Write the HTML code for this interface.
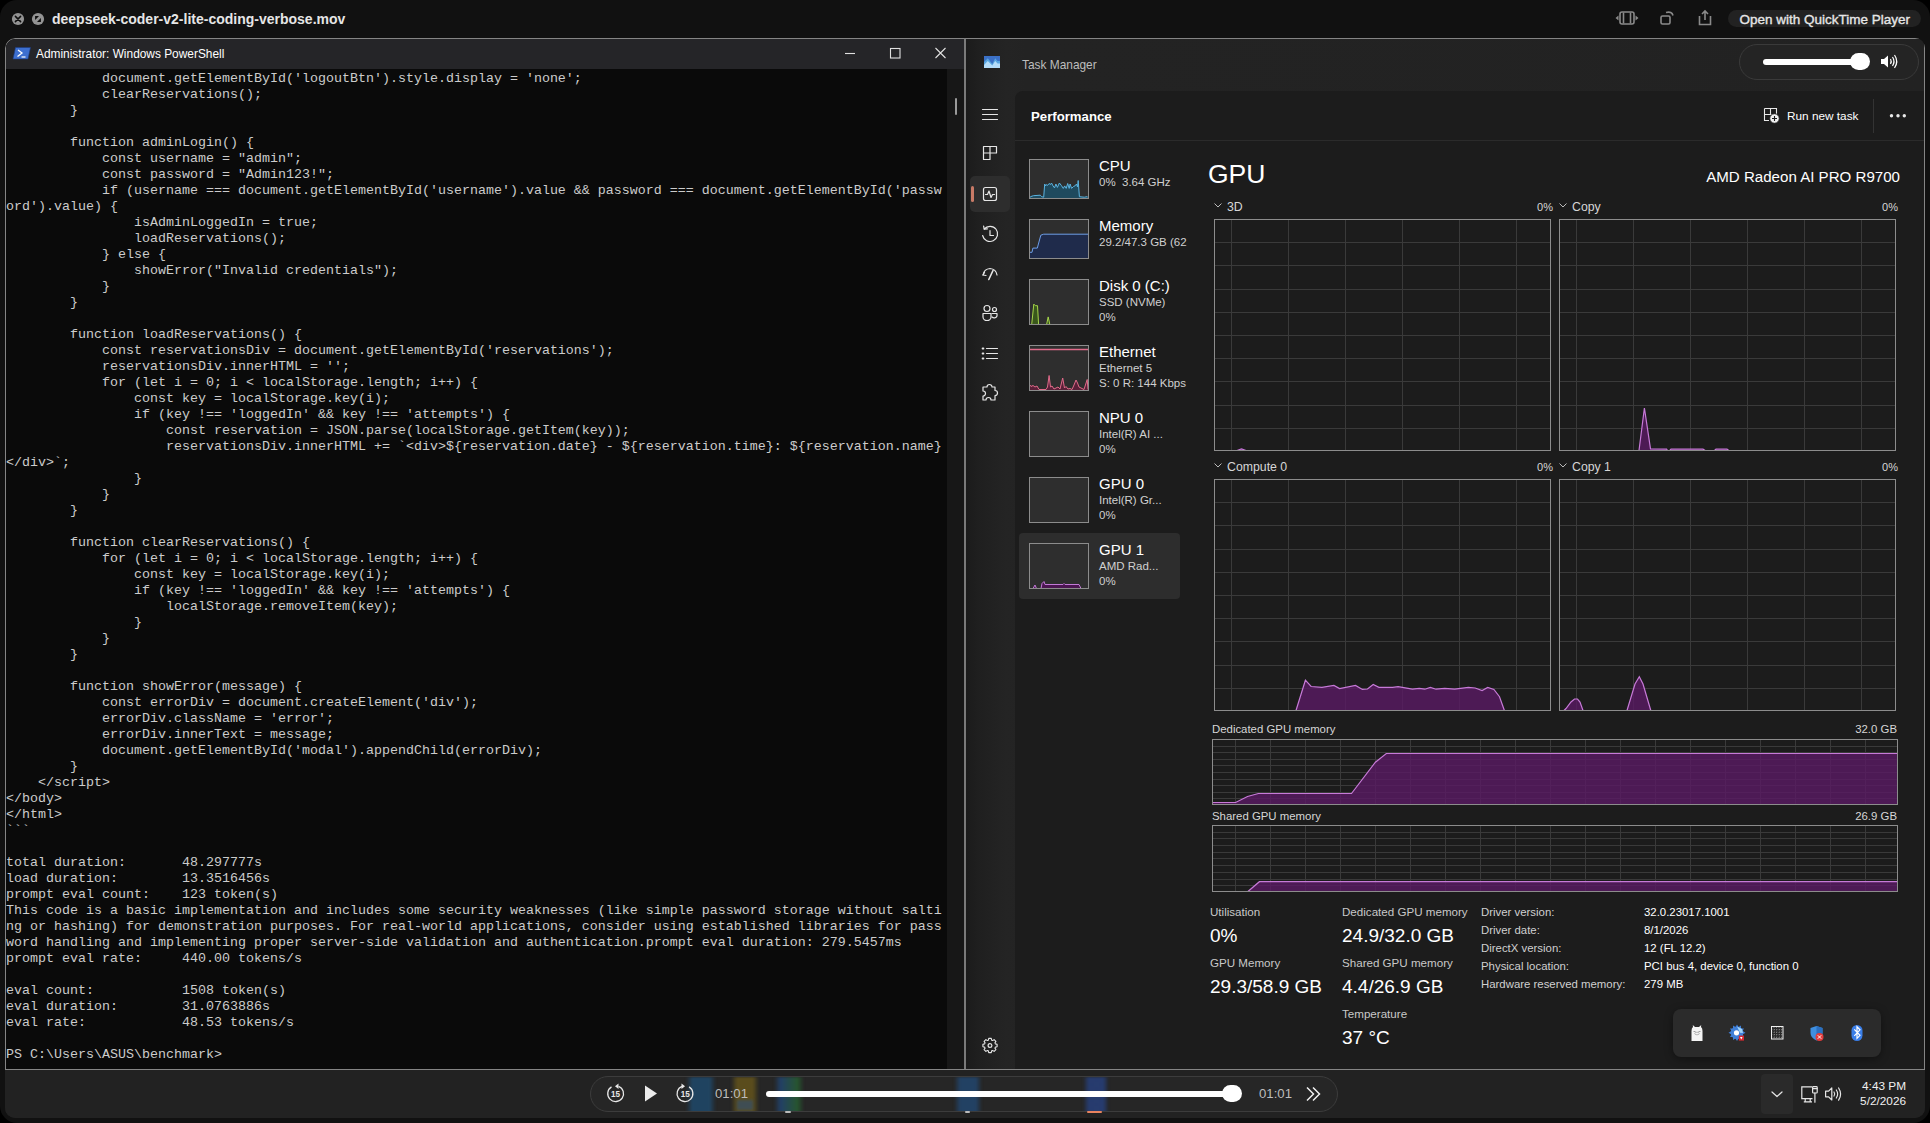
<!DOCTYPE html><html><head><meta charset="utf-8"><style>
*{box-sizing:border-box;margin:0;padding:0}
html,body{width:1930px;height:1123px;overflow:hidden;background:#000}
body{position:relative;font-family:"Liberation Sans",sans-serif;color:#fff}
.a{position:absolute}
svg.s{position:absolute;left:0;top:0;overflow:visible}
#win{position:absolute;left:0;top:0;width:1930px;height:1123px;border-radius:17px;background:#111;overflow:hidden}
#frame{position:absolute;left:5px;top:38px;width:1920px;height:1080px;border-radius:10px;overflow:hidden;background:#1f1f1f}
#ps{position:absolute;left:0;top:0;width:960px;height:1032px;background:#0a0a0a;border:1px solid #858585;border-right:none;border-bottom:none;border-top-left-radius:10px;overflow:hidden}
#pstitle{position:absolute;left:0;top:0;width:959px;height:30px;background:#252528}
#term{position:absolute;left:0px;top:32px;width:941px;font-family:"Liberation Mono",monospace;font-size:13.333px;line-height:16px;color:#cccccc;white-space:pre}
#sb{position:absolute;left:941px;top:30px;width:18px;height:1002px;background:#171717}
#tm{position:absolute;left:959px;top:0;width:961px;height:1032px;background:linear-gradient(90deg,#1b1b1b 0px,#1f1f1f 12px,#242424 40px,#232323 60px,#222222 100%);border-top:1px solid #858585;border-left:2px solid #7a7a7a;border-right:1px solid #858585;border-bottom:1px solid #858585}
#tb{position:absolute;left:0;top:1032px;width:1920px;height:48px;background:#222222}
.t{position:absolute;white-space:pre;line-height:1}
</style></head><body>
<div id="win">
<div id="frame">
<div id="ps"><div id="pstitle"></div>
<div id="term">            document.getElementById(&#x27;logoutBtn&#x27;).style.display = &#x27;none&#x27;;
            clearReservations();
        }

        function adminLogin() {
            const username = &quot;admin&quot;;
            const password = &quot;Admin123!&quot;;
            if (username === document.getElementById(&#x27;username&#x27;).value &amp;&amp; password === document.getElementById(&#x27;passw
ord&#x27;).value) {
                isAdminLoggedIn = true;
                loadReservations();
            } else {
                showError(&quot;Invalid credentials&quot;);
            }
        }

        function loadReservations() {
            const reservationsDiv = document.getElementById(&#x27;reservations&#x27;);
            reservationsDiv.innerHTML = &#x27;&#x27;;
            for (let i = 0; i &lt; localStorage.length; i++) {
                const key = localStorage.key(i);
                if (key !== &#x27;loggedIn&#x27; &amp;&amp; key !== &#x27;attempts&#x27;) {
                    const reservation = JSON.parse(localStorage.getItem(key));
                    reservationsDiv.innerHTML += `&lt;div&gt;${reservation.date} - ${reservation.time}: ${reservation.name}
&lt;/div&gt;`;
                }
            }
        }

        function clearReservations() {
            for (let i = 0; i &lt; localStorage.length; i++) {
                const key = localStorage.key(i);
                if (key !== &#x27;loggedIn&#x27; &amp;&amp; key !== &#x27;attempts&#x27;) {
                    localStorage.removeItem(key);
                }
            }
        }

        function showError(message) {
            const errorDiv = document.createElement(&#x27;div&#x27;);
            errorDiv.className = &#x27;error&#x27;;
            errorDiv.innerText = message;
            document.getElementById(&#x27;modal&#x27;).appendChild(errorDiv);
        }
    &lt;/script&gt;
&lt;/body&gt;
&lt;/html&gt;
```

total duration:       48.297777s
load duration:        13.3516456s
prompt eval count:    123 token(s)
This code is a basic implementation and includes some security weaknesses (like simple password storage without salti
ng or hashing) for demonstration purposes. For real-world applications, consider using established libraries for pass
word handling and implementing proper server-side validation and authentication.prompt eval duration: 279.5457ms
prompt eval rate:     440.00 tokens/s

eval count:           1508 token(s)
eval duration:        31.0763886s
eval rate:            48.53 tokens/s

PS C:\Users\ASUS\benchmark&gt;</div>
<div id="sb"><div class="a" style="left:8px;top:29px;width:2px;height:17px;background:#9a9a9a;border-radius:1px"></div></div>
</div>
<div id="tm"></div>
<div id="tb"></div>
</div>
</div>
<svg class="s" width="1930" height="1123" viewBox="0 0 1930 1123" >
<circle cx="18" cy="19" r="6.1" fill="#939393"/>
<path d="M15.4 16.4 L20.6 21.6 M20.6 16.4 L15.4 21.6" stroke="#0e0e0e" stroke-width="1.5" stroke-linecap="round"/>
<circle cx="38" cy="19" r="6.1" fill="#939393"/>
<path d="M35.1 16 L39 16 L35.1 19.9 Z M40.9 22 L37 22 L40.9 18.1 Z" fill="#0e0e0e"/>
</svg>
<div class="t" style="left:52.00px;top:11.95px;font-size:14px;color:#e6e6e6;font-weight:bold;">deepseek-coder-v2-lite-coding-verbose.mov</div>
<svg class="s" width="1930" height="1123" viewBox="0 0 1930 1123" >
<g stroke="#8a8a8a" fill="none" stroke-width="1.6">
<rect x="1620" y="12" width="14" height="12" rx="2"/>
<line x1="1623.5" y1="12.5" x2="1623.5" y2="23.5"/>
<line x1="1630.5" y1="12.5" x2="1630.5" y2="23.5"/>
<rect x="1661" y="16" width="9" height="8" rx="1.5"/>
<path d="M1666 12.5 Q1672 11 1673 15.5"/>
<path d="M1699.5 16 L1699.5 24.5 L1710.5 24.5 L1710.5 16"/>
<path d="M1705 20 L1705 11 M1702 14 L1705 11 L1708 14"/>
</g>
<path d="M1615.5 18 L1618.5 15.5 L1618.5 20.5 Z M1638.5 18 L1635.5 15.5 L1635.5 20.5 Z" fill="#8a8a8a"/>
</svg>
<div class="a" style="left:1728px;top:10px;width:193px;height:17px;background:#222;border-radius:9px"></div>
<div class="t" style="left:1739.50px;top:12.57px;font-size:13.5px;color:#e6e6e6;-webkit-text-stroke:0.35px #e6e6e6;">Open with QuickTime Player</div>
<svg class="s" width="1930" height="1123" viewBox="0 0 1930 1123" >
<path d="M15.5 47.5 L30.5 47.5 L28 59 L13 59 Z" fill="#3d6fd0" stroke="#1b3a80" stroke-width="0.6"/>
<path d="M18 50 L22 53 L17.5 56.5" fill="none" stroke="#fff" stroke-width="1.3"/>
<path d="M21.5 57 L25.5 57" stroke="#fff" stroke-width="1.2"/>
<g stroke="#e0e0e0" stroke-width="1.1" fill="none">
<line x1="845" y1="53.5" x2="855" y2="53.5"/>
<rect x="890.5" y="48.5" width="9.5" height="9.5"/>
<path d="M935.5 48 L945.5 58 M945.5 48 L935.5 58"/>
</g>
</svg>
<div class="t" style="left:36.00px;top:48.93px;font-size:11.9px;color:#ffffff;">Administrator: Windows PowerShell</div>
<svg class="s" width="1930" height="1123" viewBox="0 0 1930 1123" >
<rect x="984" y="56" width="16" height="12" fill="#3b70c6"/>
<path d="M984 62 L987.8 58.2 L992.3 64 L995.2 58.2 L997.5 61 L1000 61 L1000 68 L984 68 Z" fill="#58a6e0"/>
<path d="M984 65 L987.8 61 L992.3 65.5 L995.2 61 L997.5 63.5 L1000 63.5 L1000 68 L984 68 Z" fill="#b4ddfa"/>
</svg>
<div class="t" style="left:1022.00px;top:59.93px;font-size:11.9px;color:#bdbdbd;">Task Manager</div>
<div class="a" style="left:1739px;top:44px;width:180px;height:36px;background:#242424;border:1px solid #3a3a3a;border-radius:18px"></div>
<div class="a" style="left:1763px;top:59px;width:100px;height:6px;background:#fff;border-radius:3px"></div>
<div class="a" style="left:1850px;top:53px;width:20px;height:17px;background:#fff;border-radius:9px"></div>
<svg class="s" width="1930" height="1123" viewBox="0 0 1930 1123" >
<path d="M1881 59 L1884 59 L1888 55.5 L1888 67.5 L1884 64 L1881 64 Z" fill="#fff"/>
<g fill="none" stroke="#fff" stroke-width="1.2">
<path d="M1890.5 59 Q1892 61.5 1890.5 64"/>
<path d="M1892.5 57 Q1895.5 61.5 1892.5 66"/>
<path d="M1894.5 55 Q1899 61.5 1894.5 68"/>
</g>
</svg>
<div class="a" style="left:1015px;top:91px;width:909px;height:978px;background:#1c1c1c;border-top-left-radius:8px"></div>
<div class="a" style="left:1015px;top:140px;width:909px;height:1px;background:#2b2b2b"></div>
<div class="t" style="left:1031.00px;top:109.53px;font-size:13.2px;color:#ffffff;font-weight:bold;">Performance</div>
<svg class="s" width="1930" height="1123" viewBox="0 0 1930 1123" >
<g stroke="#e8e8e8" stroke-width="1.1" fill="none">
<path d="M1764.5 108.5 L1776.5 108.5 L1776.5 114 M1764.5 108.5 L1764.5 120.5 L1769 120.5 M1770.5 108.5 L1770.5 114.5 M1764.5 114.5 L1776.5 114.5"/>
</g>
<circle cx="1774.5" cy="118.5" r="4.8" fill="#f0f0f0" stroke="#1c1c1c" stroke-width="1"/>
<path d="M1774.5 116 L1774.5 121 M1772 118.5 L1777 118.5" stroke="#1c1c1c" stroke-width="1.1"/>
<line x1="1873.5" y1="99" x2="1873.5" y2="133" stroke="#333" stroke-width="1"/>
<circle cx="1891.5" cy="115.8" r="1.7" fill="#e8e8e8"/>
<circle cx="1898" cy="115.8" r="1.7" fill="#e8e8e8"/>
<circle cx="1904.3" cy="115.8" r="1.7" fill="#e8e8e8"/>
</svg>
<div class="t" style="left:1787.00px;top:111.01px;font-size:11.8px;color:#ffffff;">Run new task</div>
<div class="a" style="left:970px;top:176px;width:40px;height:36px;background:#2d2d2d;border-radius:5px"></div>
<div class="a" style="left:971px;top:186px;width:3px;height:16px;background:#c97b67;border-radius:2px"></div>
<svg class="s" width="1930" height="1123" viewBox="0 0 1930 1123" >
<g stroke="#e6e6e6" stroke-width="1.2" fill="none" stroke-linecap="round" stroke-linejoin="round">
<path d="M982.5 109.5 L997.5 109.5 M982.5 114.5 L997.5 114.5 M982.5 119.5 L997.5 119.5"/>
<path d="M983.5 146.5 L990 146.5 L990 153 L983.5 153 Z M990 146.5 L996.5 146.5 L996.5 153 L990 153 M983.5 153 L983.5 159.5 L990 159.5 L990 153"/>
<rect x="983.5" y="187.5" width="13" height="13" rx="2"/>
<path d="M985.5 194.5 L987.5 194.5 L989 191 L991 197.5 L992.5 194.5 L994.5 194.5"/>
<path d="M984.2 229 A7.6 7.6 0 1 1 982.6 235.5"/>
<path d="M983.6 226 L984.2 229.2 L987.4 228.8"/>
<path d="M990 230.5 L990 235.5 L993.5 235.5"/>
<path d="M983 275 Q984 269 990 268.5 Q996 269 997 275"/>
<path d="M984.5 272.5 L983 275 L986 275.5"/>
<path d="M993 270.5 L988.8 279.5" stroke-width="1.6"/>
<circle cx="987" cy="308.5" r="3"/>
<circle cx="994.5" cy="309.5" r="2"/>
<path d="M983 313.5 L991 313.5 L991 317 A4 3.5 0 0 1 983 317 Z"/>
<path d="M992 313.5 L997 313.5 L997 316 A3 3 0 0 1 992 317"/>
<path d="M986.5 348.5 L997.5 348.5 M986.5 353.5 L997.5 353.5 M986.5 358.5 L997.5 358.5"/>
<path d="M982.6 348.5 L983.4 348.5 M982.6 353.5 L983.4 353.5 M982.6 358.5 L983.4 358.5" stroke-width="1.9"/>
<path d="M987 387 A2.5 2.5 0 0 1 992 387 L995 387 L995 390.5 A2.5 2.5 0 0 1 995 395.5 L995 400 L991 400 A2.5 2.5 0 0 0 986 400 L983 400 L983 396 A2.5 2.5 0 0 0 983 391 L983 387 Z"/>
<path d="M988.35 1040.15 L988.74 1038.41 L991.26 1038.41 L991.65 1040.15 L992.61 1040.55 L994.12 1039.60 L995.90 1041.38 L994.95 1042.89 L995.35 1043.85 L997.09 1044.24 L997.09 1046.76 L995.35 1047.15 L994.95 1048.11 L995.90 1049.62 L994.12 1051.40 L992.61 1050.45 L991.65 1050.85 L991.26 1052.59 L988.74 1052.59 L988.35 1050.85 L987.39 1050.45 L985.88 1051.40 L984.10 1049.62 L985.05 1048.11 L984.65 1047.15 L982.91 1046.76 L982.91 1044.24 L984.65 1043.85 L985.05 1042.89 L984.10 1041.38 L985.88 1039.60 L987.39 1040.55 Z" stroke-width="1.1"/>
<circle cx="990" cy="1045.5" r="1.9"/>
</g>
</svg>
<div class="a" style="left:1019px;top:533px;width:161px;height:66px;background:#2d2d2d;border-radius:4px"></div>
<div class="a" style="left:1029px;top:159px;width:60px;height:40px;background:#2e2e2e"></div>
<svg class="s" width="1930" height="1123" viewBox="0 0 1930 1123" ><polygon points="1030,198.5 1029.5,197.7 1031.0,196.5 1033.4,195.7 1040.3,195.2 1041.7,196.7 1043.7,197.2 1044.7,184.0 1045.7,185.9 1046.6,184.5 1047.6,185.4 1049.1,183.5 1050.5,184.5 1051.5,183.0 1053.0,185.9 1054.5,187.9 1055.9,184.0 1057.4,187.4 1059.4,183.0 1061.3,185.4 1063.3,188.4 1064.7,185.9 1066.2,188.4 1067.7,183.5 1069.2,188.4 1070.1,184.0 1071.6,188.4 1073.6,186.4 1075.0,185.9 1076.5,184.0 1077.5,186.9 1078.2,180.5 1079.4,196.7 1084.3,197.2 1087.3,196.7 1088.3,197.7 1088,198.5" fill="#1f4a5e" stroke="none"/><polyline points="1029.5,197.7 1031.0,196.5 1033.4,195.7 1040.3,195.2 1041.7,196.7 1043.7,197.2 1044.7,184.0 1045.7,185.9 1046.6,184.5 1047.6,185.4 1049.1,183.5 1050.5,184.5 1051.5,183.0 1053.0,185.9 1054.5,187.9 1055.9,184.0 1057.4,187.4 1059.4,183.0 1061.3,185.4 1063.3,188.4 1064.7,185.9 1066.2,188.4 1067.7,183.5 1069.2,188.4 1070.1,184.0 1071.6,188.4 1073.6,186.4 1075.0,185.9 1076.5,184.0 1077.5,186.9 1078.2,180.5 1079.4,196.7 1084.3,197.2 1087.3,196.7 1088.3,197.7" fill="none" stroke="#5ab4e2" stroke-width="1"/></svg>
<div class="a" style="left:1029px;top:159px;width:60px;height:40px;border:1px solid #8c8c8c"></div>
<div class="a" style="left:1029px;top:219px;width:60px;height:40px;background:#2e2e2e"></div>
<svg class="s" width="1930" height="1123" viewBox="0 0 1930 1123" ><polygon points="1030,258.5 1030.0,252.3 1032.0,252.3 1032.9,248.1 1037.3,248.1 1040.8,235.2 1043.7,234.2 1088.0,234.2 1088,258.5" fill="#1f2b4b" stroke="none"/><polyline points="1030.0,252.3 1032.0,252.3 1032.9,248.1 1037.3,248.1 1040.8,235.2 1043.7,234.2 1088.0,234.2" fill="none" stroke="#6d9ee8" stroke-width="1"/></svg>
<div class="a" style="left:1029px;top:219px;width:60px;height:40px;border:1px solid #8c8c8c"></div>
<div class="a" style="left:1029px;top:279px;width:60px;height:46px;background:#2e2e2e"></div>
<svg class="s" width="1930" height="1123" viewBox="0 0 1930 1123" ><polygon points="1030,324.5 1030.0,324.5 1031.7,324.5 1033.8,304.1 1035.4,305.7 1037.5,305.7 1038.6,324.5 1046.6,324.5 1048.2,316.9 1049.8,324.5 1088.0,324.5 1088,324.5" fill="#3a571c" stroke="none"/><polyline points="1030.0,324.5 1031.7,324.5 1033.8,304.1 1035.4,305.7 1037.5,305.7 1038.6,324.5 1046.6,324.5 1048.2,316.9 1049.8,324.5 1088.0,324.5" fill="none" stroke="#a6d64a" stroke-width="1"/></svg>
<div class="a" style="left:1029px;top:279px;width:60px;height:46px;border:1px solid #8c8c8c"></div>
<div class="a" style="left:1029px;top:345px;width:60px;height:46px;background:#2e2e2e"></div>
<svg class="s" width="1930" height="1123" viewBox="0 0 1930 1123" ><line x1="1030" y1="349.5" x2="1088" y2="349.5" stroke="#e06b8a" stroke-width="1.3"/><polygon points="1030,390.5 1030.0,385.0 1031.0,386.5 1033.0,385.5 1035.0,387.0 1037.0,386.0 1039.0,389.5 1046.0,389.5 1047.5,387.0 1049.1,375.5 1050.5,387.0 1052.0,386.0 1054.0,389.0 1056.0,388.0 1058.0,387.0 1060.0,389.0 1062.7,378.0 1064.5,388.0 1066.0,386.5 1068.0,389.0 1070.0,388.5 1072.0,389.5 1074.0,385.0 1076.0,380.0 1077.5,383.0 1079.0,387.0 1081.0,388.0 1084.0,389.5 1087.2,379.5 1088.0,389.5 1088,390.5" fill="#5a2038" stroke="none"/><polyline points="1030.0,385.0 1031.0,386.5 1033.0,385.5 1035.0,387.0 1037.0,386.0 1039.0,389.5 1046.0,389.5 1047.5,387.0 1049.1,375.5 1050.5,387.0 1052.0,386.0 1054.0,389.0 1056.0,388.0 1058.0,387.0 1060.0,389.0 1062.7,378.0 1064.5,388.0 1066.0,386.5 1068.0,389.0 1070.0,388.5 1072.0,389.5 1074.0,385.0 1076.0,380.0 1077.5,383.0 1079.0,387.0 1081.0,388.0 1084.0,389.5 1087.2,379.5 1088.0,389.5" fill="none" stroke="#e06b8a" stroke-width="1"/></svg>
<div class="a" style="left:1029px;top:345px;width:60px;height:46px;border:1px solid #8c8c8c"></div>
<div class="a" style="left:1029px;top:411px;width:60px;height:46px;background:#2e2e2e"></div>
<div class="a" style="left:1029px;top:411px;width:60px;height:46px;border:1px solid #8c8c8c"></div>
<div class="a" style="left:1029px;top:477px;width:60px;height:46px;background:#2e2e2e"></div>
<div class="a" style="left:1029px;top:477px;width:60px;height:46px;border:1px solid #8c8c8c"></div>
<div class="a" style="left:1029px;top:543px;width:60px;height:46px;background:#2e2e2e"></div>
<svg class="s" width="1930" height="1123" viewBox="0 0 1930 1123" ><polygon points="1030,588.5 1030.0,588.5 1033.0,588.5 1035.0,585.0 1036.5,588.5 1041.0,588.5 1042.0,583.5 1044.0,581.5 1045.0,584.5 1063.0,584.5 1064.0,583.5 1065.0,584.5 1079.0,584.5 1081.0,588.5 1088.0,588.5 1088,588.5" fill="#4a1550" stroke="none"/><polyline points="1030.0,588.5 1033.0,588.5 1035.0,585.0 1036.5,588.5 1041.0,588.5 1042.0,583.5 1044.0,581.5 1045.0,584.5 1063.0,584.5 1064.0,583.5 1065.0,584.5 1079.0,584.5 1081.0,588.5 1088.0,588.5" fill="none" stroke="#c27ad6" stroke-width="1"/></svg>
<div class="a" style="left:1029px;top:543px;width:60px;height:46px;border:1px solid #8c8c8c"></div>
<div class="t" style="left:1099.00px;top:157.60px;font-size:15px;color:#ffffff;">CPU</div>
<div class="t" style="left:1099.00px;top:177.37px;font-size:11.5px;color:#d0d0d0;">0%  3.64 GHz</div>
<div class="t" style="left:1099.00px;top:217.60px;font-size:15px;color:#ffffff;">Memory</div>
<div class="t" style="left:1099.00px;top:237.37px;font-size:11.5px;color:#d0d0d0;">29.2/47.3 GB (62</div>
<div class="t" style="left:1099.00px;top:277.60px;font-size:15px;color:#ffffff;">Disk 0 (C:)</div>
<div class="t" style="left:1099.00px;top:297.37px;font-size:11.5px;color:#d0d0d0;">SSD (NVMe)</div>
<div class="t" style="left:1099.00px;top:312.37px;font-size:11.5px;color:#d0d0d0;">0%</div>
<div class="t" style="left:1099.00px;top:343.60px;font-size:15px;color:#ffffff;">Ethernet</div>
<div class="t" style="left:1099.00px;top:363.37px;font-size:11.5px;color:#d0d0d0;">Ethernet 5</div>
<div class="t" style="left:1099.00px;top:378.37px;font-size:11.5px;color:#d0d0d0;">S: 0 R: 144 Kbps</div>
<div class="t" style="left:1099.00px;top:409.60px;font-size:15px;color:#ffffff;">NPU 0</div>
<div class="t" style="left:1099.00px;top:429.37px;font-size:11.5px;color:#d0d0d0;">Intel(R) AI ...</div>
<div class="t" style="left:1099.00px;top:444.37px;font-size:11.5px;color:#d0d0d0;">0%</div>
<div class="t" style="left:1099.00px;top:475.60px;font-size:15px;color:#ffffff;">GPU 0</div>
<div class="t" style="left:1099.00px;top:495.37px;font-size:11.5px;color:#d0d0d0;">Intel(R) Gr...</div>
<div class="t" style="left:1099.00px;top:510.37px;font-size:11.5px;color:#d0d0d0;">0%</div>
<div class="t" style="left:1099.00px;top:541.60px;font-size:15px;color:#ffffff;">GPU 1</div>
<div class="t" style="left:1099.00px;top:561.37px;font-size:11.5px;color:#d0d0d0;">AMD Rad...</div>
<div class="t" style="left:1099.00px;top:576.37px;font-size:11.5px;color:#d0d0d0;">0%</div>
<div class="t" style="left:1208.00px;top:160.77px;font-size:26.5px;color:#ffffff;">GPU</div>
<div class="t" style="right:30.00px;top:169.42px;font-size:15.1px;color:#ffffff;">AMD Radeon AI PRO R9700</div>
<svg class="s" width="1930" height="1123" viewBox="0 0 1930 1123" ><path d="M1214.5 203.5 L1218 207 L1221.5 203.5" fill="none" stroke="#bbb" stroke-width="1"/></svg>
<div class="t" style="left:1227.00px;top:200.59px;font-size:12.3px;color:#d6d6d6;">3D</div>
<div class="t" style="right:377.00px;top:201.69px;font-size:11px;color:#d6d6d6;">0%</div>
<svg class="s" width="1930" height="1123" viewBox="0 0 1930 1123" ><path d="M1559.5 203.5 L1563 207 L1566.5 203.5" fill="none" stroke="#bbb" stroke-width="1"/></svg>
<div class="t" style="left:1572.00px;top:200.59px;font-size:12.3px;color:#d6d6d6;">Copy</div>
<div class="t" style="right:32.00px;top:201.69px;font-size:11px;color:#d6d6d6;">0%</div>
<svg class="s" width="1930" height="1123" viewBox="0 0 1930 1123" ><path d="M1214.5 463.5 L1218 467 L1221.5 463.5" fill="none" stroke="#bbb" stroke-width="1"/></svg>
<div class="t" style="left:1227.00px;top:460.59px;font-size:12.3px;color:#d6d6d6;">Compute 0</div>
<div class="t" style="right:377.00px;top:461.69px;font-size:11px;color:#d6d6d6;">0%</div>
<svg class="s" width="1930" height="1123" viewBox="0 0 1930 1123" ><path d="M1559.5 463.5 L1563 467 L1566.5 463.5" fill="none" stroke="#bbb" stroke-width="1"/></svg>
<div class="t" style="left:1572.00px;top:460.59px;font-size:12.3px;color:#d6d6d6;">Copy 1</div>
<div class="t" style="right:32.00px;top:461.69px;font-size:11px;color:#d6d6d6;">0%</div>
<svg class="s" width="1930" height="1123" viewBox="0 0 1930 1123" ><rect x="1214.5" y="219.5" width="336" height="231" fill="#1c1c1c" stroke="none"/><path d="M1215 242.5 L1550 242.5 M1215 265.5 L1550 265.5 M1215 289.5 L1550 289.5 M1215 312.5 L1550 312.5 M1215 335.5 L1550 335.5 M1215 358.5 L1550 358.5 M1215 381.5 L1550 381.5 M1215 405.5 L1550 405.5 M1215 428.5 L1550 428.5 M1231.5 220 L1231.5 450 M1288.5 220 L1288.5 450 M1345.5 220 L1345.5 450 M1402.5 220 L1402.5 450 M1459.5 220 L1459.5 450 M1516.5 220 L1516.5 450 " stroke="#3a3a3a" stroke-width="1" fill="none"/><polygon points="1237.0,450.5 1237.0,450.5 1241.5,449.0 1246.0,450.5 1246.0,450.5" fill="#5a1a64" fill-opacity="0.8"/><polyline points="1237.0,450.5 1241.5,449.0 1246.0,450.5" fill="none" stroke="#c77ad8" stroke-width="1.2"/><rect x="1214.5" y="219.5" width="336" height="231" fill="none" stroke="#8c8c8c" stroke-width="1"/></svg>
<svg class="s" width="1930" height="1123" viewBox="0 0 1930 1123" ><rect x="1559.5" y="219.5" width="336" height="231" fill="#1c1c1c" stroke="none"/><path d="M1560 242.5 L1895 242.5 M1560 265.5 L1895 265.5 M1560 289.5 L1895 289.5 M1560 312.5 L1895 312.5 M1560 335.5 L1895 335.5 M1560 358.5 L1895 358.5 M1560 381.5 L1895 381.5 M1560 405.5 L1895 405.5 M1560 428.5 L1895 428.5 M1576.5 220 L1576.5 450 M1633.5 220 L1633.5 450 M1690.5 220 L1690.5 450 M1747.5 220 L1747.5 450 M1804.5 220 L1804.5 450 M1861.5 220 L1861.5 450 " stroke="#3a3a3a" stroke-width="1" fill="none"/><polygon points="1639.0,450.5 1639.0,450.5 1644.4,408.0 1650.5,448.8 1666.6,449.2 1667.5,450.5 1667.5,450.5" fill="#5a1a64" fill-opacity="0.8"/><polyline points="1639.0,450.5 1644.4,408.0 1650.5,448.8 1666.6,449.2 1667.5,450.5" fill="none" stroke="#c77ad8" stroke-width="1.2"/><polygon points="1669.8,450.5 1669.8,450.5 1671.0,449.2 1703.0,449.2 1705.2,450.5 1705.2,450.5" fill="#5a1a64" fill-opacity="0.8"/><polyline points="1669.8,450.5 1671.0,449.2 1703.0,449.2 1705.2,450.5" fill="none" stroke="#c77ad8" stroke-width="1.2"/><polygon points="1714.5,450.5 1714.5,450.5 1716.0,449.2 1727.0,449.2 1728.8,450.5 1728.8,450.5" fill="#5a1a64" fill-opacity="0.8"/><polyline points="1714.5,450.5 1716.0,449.2 1727.0,449.2 1728.8,450.5" fill="none" stroke="#c77ad8" stroke-width="1.2"/><rect x="1559.5" y="219.5" width="336" height="231" fill="none" stroke="#8c8c8c" stroke-width="1"/></svg>
<svg class="s" width="1930" height="1123" viewBox="0 0 1930 1123" ><rect x="1214.5" y="479.5" width="336" height="231" fill="#1c1c1c" stroke="none"/><path d="M1215 502.5 L1550 502.5 M1215 525.5 L1550 525.5 M1215 549.5 L1550 549.5 M1215 572.5 L1550 572.5 M1215 595.5 L1550 595.5 M1215 618.5 L1550 618.5 M1215 641.5 L1550 641.5 M1215 665.5 L1550 665.5 M1215 688.5 L1550 688.5 M1231.5 480 L1231.5 710 M1288.5 480 L1288.5 710 M1345.5 480 L1345.5 710 M1402.5 480 L1402.5 710 M1459.5 480 L1459.5 710 M1516.5 480 L1516.5 710 " stroke="#3a3a3a" stroke-width="1" fill="none"/><polygon points="1296.0,710.5 1296.0,710.5 1305.4,680.2 1311.1,686.5 1321.9,687.4 1333.9,685.4 1339.6,688.5 1355.5,685.4 1362.4,689.4 1367.5,689.0 1373.2,684.5 1378.9,687.4 1392.6,687.4 1398.1,686.7 1412.4,689.2 1419.3,688.3 1424.8,689.2 1430.4,687.4 1436.0,689.2 1444.7,688.3 1454.7,689.2 1468.4,687.4 1475.2,688.0 1482.1,690.5 1487.7,687.4 1493.9,689.5 1499.5,696.7 1504.4,710.5 1504.4,710.5" fill="#5a1a64" fill-opacity="0.8"/><polyline points="1296.0,710.5 1305.4,680.2 1311.1,686.5 1321.9,687.4 1333.9,685.4 1339.6,688.5 1355.5,685.4 1362.4,689.4 1367.5,689.0 1373.2,684.5 1378.9,687.4 1392.6,687.4 1398.1,686.7 1412.4,689.2 1419.3,688.3 1424.8,689.2 1430.4,687.4 1436.0,689.2 1444.7,688.3 1454.7,689.2 1468.4,687.4 1475.2,688.0 1482.1,690.5 1487.7,687.4 1493.9,689.5 1499.5,696.7 1504.4,710.5" fill="none" stroke="#c77ad8" stroke-width="1.2"/><rect x="1214.5" y="479.5" width="336" height="231" fill="none" stroke="#8c8c8c" stroke-width="1"/></svg>
<svg class="s" width="1930" height="1123" viewBox="0 0 1930 1123" ><rect x="1559.5" y="479.5" width="336" height="231" fill="#1c1c1c" stroke="none"/><path d="M1560 502.5 L1895 502.5 M1560 525.5 L1895 525.5 M1560 549.5 L1895 549.5 M1560 572.5 L1895 572.5 M1560 595.5 L1895 595.5 M1560 618.5 L1895 618.5 M1560 641.5 L1895 641.5 M1560 665.5 L1895 665.5 M1560 688.5 L1895 688.5 M1576.5 480 L1576.5 710 M1633.5 480 L1633.5 710 M1690.5 480 L1690.5 710 M1747.5 480 L1747.5 710 M1804.5 480 L1804.5 710 M1861.5 480 L1861.5 710 " stroke="#3a3a3a" stroke-width="1" fill="none"/><polygon points="1564.0,710.5 1564.0,710.5 1566.0,708.5 1571.0,702.0 1574.5,699.0 1577.5,699.0 1580.0,702.0 1583.0,710.5 1583.0,710.5" fill="#5a1a64" fill-opacity="0.8"/><polyline points="1564.0,710.5 1566.0,708.5 1571.0,702.0 1574.5,699.0 1577.5,699.0 1580.0,702.0 1583.0,710.5" fill="none" stroke="#c77ad8" stroke-width="1.2"/><polygon points="1627.0,710.5 1627.0,710.5 1635.0,684.0 1639.3,676.8 1643.0,684.0 1650.8,710.5 1650.8,710.5" fill="#5a1a64" fill-opacity="0.8"/><polyline points="1627.0,710.5 1635.0,684.0 1639.3,676.8 1643.0,684.0 1650.8,710.5" fill="none" stroke="#c77ad8" stroke-width="1.2"/><rect x="1559.5" y="479.5" width="336" height="231" fill="none" stroke="#8c8c8c" stroke-width="1"/></svg>
<div class="t" style="left:1212.00px;top:723.55px;font-size:11.4px;color:#d6d6d6;">Dedicated GPU memory</div>
<div class="t" style="right:33.00px;top:723.55px;font-size:11.4px;color:#d6d6d6;">32.0 GB</div>
<svg class="s" width="1930" height="1123" viewBox="0 0 1930 1123" ><rect x="1212.5" y="739.5" width="685" height="65" fill="#1c1c1c" stroke="none"/><path d="M1213 746.5 L1897 746.5 M1213 752.5 L1897 752.5 M1213 759.5 L1897 759.5 M1213 765.5 L1897 765.5 M1213 772.5 L1897 772.5 M1213 779.5 L1897 779.5 M1213 785.5 L1897 785.5 M1213 792.5 L1897 792.5 M1213 798.5 L1897 798.5 M1235.5 740 L1235.5 804 M1270.5 740 L1270.5 804 M1305.5 740 L1305.5 804 M1340.5 740 L1340.5 804 M1375.5 740 L1375.5 804 M1410.5 740 L1410.5 804 M1445.5 740 L1445.5 804 M1480.5 740 L1480.5 804 M1515.5 740 L1515.5 804 M1550.5 740 L1550.5 804 M1585.5 740 L1585.5 804 M1620.5 740 L1620.5 804 M1655.5 740 L1655.5 804 M1690.5 740 L1690.5 804 M1725.5 740 L1725.5 804 M1760.5 740 L1760.5 804 M1795.5 740 L1795.5 804 M1830.5 740 L1830.5 804 M1865.5 740 L1865.5 804 " stroke="#3a3a3a" stroke-width="1" fill="none"/><polygon points="1212.5,804.5 1212.5,802.5 1235.6,802.5 1247.5,796.5 1258.4,793.5 1351.5,793.5 1375.4,762.2 1386.3,753.5 1897.0,753.5 1897.0,804.5" fill="#5a1a64" fill-opacity="0.8"/><polyline points="1212.5,802.5 1235.6,802.5 1247.5,796.5 1258.4,793.5 1351.5,793.5 1375.4,762.2 1386.3,753.5 1897.0,753.5" fill="none" stroke="#c77ad8" stroke-width="1.2"/><rect x="1212.5" y="739.5" width="685" height="65" fill="none" stroke="#8c8c8c" stroke-width="1"/></svg>
<div class="t" style="left:1212.00px;top:810.55px;font-size:11.4px;color:#d6d6d6;">Shared GPU memory</div>
<div class="t" style="right:33.00px;top:810.55px;font-size:11.4px;color:#d6d6d6;">26.9 GB</div>
<svg class="s" width="1930" height="1123" viewBox="0 0 1930 1123" ><rect x="1212.5" y="825.5" width="685" height="66" fill="#1c1c1c" stroke="none"/><path d="M1213 832.5 L1897 832.5 M1213 838.5 L1897 838.5 M1213 845.5 L1897 845.5 M1213 852.5 L1897 852.5 M1213 858.5 L1897 858.5 M1213 865.5 L1897 865.5 M1213 872.5 L1897 872.5 M1213 879.5 L1897 879.5 M1213 885.5 L1897 885.5 M1235.5 826 L1235.5 891 M1270.5 826 L1270.5 891 M1305.5 826 L1305.5 891 M1340.5 826 L1340.5 891 M1375.5 826 L1375.5 891 M1410.5 826 L1410.5 891 M1445.5 826 L1445.5 891 M1480.5 826 L1480.5 891 M1515.5 826 L1515.5 891 M1550.5 826 L1550.5 891 M1585.5 826 L1585.5 891 M1620.5 826 L1620.5 891 M1655.5 826 L1655.5 891 M1690.5 826 L1690.5 891 M1725.5 826 L1725.5 891 M1760.5 826 L1760.5 891 M1795.5 826 L1795.5 891 M1830.5 826 L1830.5 891 M1865.5 826 L1865.5 891 " stroke="#3a3a3a" stroke-width="1" fill="none"/><polygon points="1247.9,891.5 1247.9,891.5 1259.4,881.7 1897.0,881.7 1897.0,891.5" fill="#5a1a64" fill-opacity="0.8"/><polyline points="1247.9,891.5 1259.4,881.7 1897.0,881.7" fill="none" stroke="#c77ad8" stroke-width="1.2"/><rect x="1212.5" y="825.5" width="685" height="66" fill="none" stroke="#8c8c8c" stroke-width="1"/></svg>
<div class="t" style="left:1210.00px;top:905.68px;font-size:11.6px;color:#c8c8c8;">Utilisation</div>
<div class="t" style="left:1210.00px;top:926.42px;font-size:19px;color:#ffffff;">0%</div>
<div class="t" style="left:1210.00px;top:956.68px;font-size:11.6px;color:#c8c8c8;">GPU Memory</div>
<div class="t" style="left:1210.00px;top:977.42px;font-size:19px;color:#ffffff;">29.3/58.9 GB</div>
<div class="t" style="left:1342.00px;top:905.68px;font-size:11.6px;color:#c8c8c8;">Dedicated GPU memory</div>
<div class="t" style="left:1342.00px;top:926.42px;font-size:19px;color:#ffffff;">24.9/32.0 GB</div>
<div class="t" style="left:1342.00px;top:956.68px;font-size:11.6px;color:#c8c8c8;">Shared GPU memory</div>
<div class="t" style="left:1342.00px;top:977.42px;font-size:19px;color:#ffffff;">4.4/26.9 GB</div>
<div class="t" style="left:1342.00px;top:1007.68px;font-size:11.6px;color:#c8c8c8;">Temperature</div>
<div class="t" style="left:1342.00px;top:1028.42px;font-size:19px;color:#ffffff;">37 °C</div>
<div class="t" style="left:1481.00px;top:906.65px;font-size:11.4px;color:#d0d0d0;">Driver version:</div>
<div class="t" style="left:1644.00px;top:906.65px;font-size:11.4px;color:#ffffff;">32.0.23017.1001</div>
<div class="t" style="left:1481.00px;top:924.65px;font-size:11.4px;color:#d0d0d0;">Driver date:</div>
<div class="t" style="left:1644.00px;top:924.65px;font-size:11.4px;color:#ffffff;">8/1/2026</div>
<div class="t" style="left:1481.00px;top:942.65px;font-size:11.4px;color:#d0d0d0;">DirectX version:</div>
<div class="t" style="left:1644.00px;top:942.65px;font-size:11.4px;color:#ffffff;">12 (FL 12.2)</div>
<div class="t" style="left:1481.00px;top:960.65px;font-size:11.4px;color:#d0d0d0;">Physical location:</div>
<div class="t" style="left:1644.00px;top:960.65px;font-size:11.4px;color:#ffffff;">PCI bus 4, device 0, function 0</div>
<div class="t" style="left:1481.00px;top:978.65px;font-size:11.4px;color:#d0d0d0;">Hardware reserved memory:</div>
<div class="t" style="left:1644.00px;top:978.65px;font-size:11.4px;color:#ffffff;">279 MB</div>
<div class="a" style="left:5px;top:1069px;width:1920px;height:1px;background:#858585"></div>
<div class="a" style="left:1673px;top:1009px;width:208px;height:48px;background:#2b2b2b;border-radius:8px;box-shadow:0 2px 8px rgba(0,0,0,0.4)"></div>
<svg class="s" width="1930" height="1123" viewBox="0 0 1930 1123" >
<path d="M1691.5 1041 L1691.5 1031 Q1691.5 1028 1693 1027 L1692.8 1025 L1695 1027 L1699 1027 L1701.2 1025 L1701 1027 Q1702.5 1028 1702.5 1031 L1702.5 1041 Z" fill="#f4f4f4"/>
<path d="M1693.5 1031.5 L1695.5 1031.5 M1698.5 1031.5 L1700.5 1031.5" stroke="#888" stroke-width="0.8"/>
<ellipse cx="1697" cy="1033.5" rx="2.2" ry="1.3" fill="none" stroke="#999" stroke-width="0.7"/>
<g fill="#3f7fd8">
<circle cx="1737" cy="1032.8" r="6.2"/>
<path d="M1737 1024.5 L1738.5 1027 L1741 1025.5 L1741 1028.5 L1744 1028.5 L1742.5 1031 L1745.5 1032.8 L1742.5 1034.5 L1744 1037 L1741 1037 L1741 1040 L1738.5 1038.5 L1737 1041 L1735.5 1038.5 L1733 1040 L1733 1037 L1730 1037 L1731.5 1034.5 L1728.5 1032.8 L1731.5 1031 L1730 1028.5 L1733 1028.5 L1733 1025.5 L1735.5 1027 Z"/>
</g>
<path d="M1737 1026.5 L1742 1029 L1743 1033 L1740 1032.8 Z" fill="#9fd3f7"/>
<circle cx="1736.5" cy="1032.8" r="2.6" fill="#ffffff"/>
<rect x="1738.8" y="1035.6" width="5.2" height="5" fill="#d7282f"/>
<path d="M1740 1037 L1742.5 1037 L1741.3 1039.5 Z" fill="#fff"/>
<rect x="1771.5" y="1026.5" width="11.5" height="12.5" fill="#2a2a2a" stroke="#f0f0f0" stroke-width="1"/>
<path d="M1774 1027 V1039 M1776.5 1027 V1039 M1779 1027 V1039 M1781.5 1027 V1039 M1771.5 1029.5 H1783 M1771.5 1032 H1783 M1771.5 1034.5 H1783 M1771.5 1037 H1783" stroke="#cfcfcf" stroke-width="0.55" stroke-dasharray="0.8 1.7"/>
<path d="M1810.5 1028 L1816.5 1026 L1822.5 1028 L1822.5 1033 Q1822.5 1038 1816.5 1040.5 Q1810.5 1038 1810.5 1033 Z" fill="#3f8fe0"/>
<path d="M1816.5 1026 L1822.5 1028 L1822.5 1033 Q1822.5 1038 1816.5 1040.5 Z" fill="#2a6fc0"/>
<circle cx="1819.5" cy="1037" r="4" fill="#e23b3b"/>
<path d="M1817.8 1035.3 L1821.2 1038.7 M1821.2 1035.3 L1817.8 1038.7" stroke="#fff" stroke-width="1"/>
<rect x="1851.5" y="1025" width="11" height="16" rx="5.5" fill="#3a7ee8"/>
<path d="M1854.3 1029.3 L1860 1035.3 L1857 1038.3 L1857 1026.8 L1860 1029.8 L1854.3 1035.8" fill="none" stroke="#fff" stroke-width="1.2"/>
</svg>
<div class="a" style="left:1761px;top:1074px;width:32px;height:40px;background:#2a2a2a;border-radius:4px"></div>
<svg class="s" width="1930" height="1123" viewBox="0 0 1930 1123" >
<g fill="none" stroke="#e6e6e6" stroke-width="1.2" stroke-linecap="round" stroke-linejoin="round">
<path d="M1772 1092 L1777 1096.5 L1782 1092"/>
<path d="M1812 1086.8 H1801.8 V1098.6 H1812.5 M1805.2 1098.6 V1101.8 M1810.2 1098.6 V1101.8 M1803.8 1101.8 H1812" stroke-linecap="butt" stroke-linejoin="miter"/>
<rect x="1812.6" y="1086.6" width="4.6" height="6.4" rx="0.8"/>
<path d="M1812.6 1088.6 H1817.2 M1814.9 1093 V1102.2"/>
<path d="M1825.6 1091.2 L1828.6 1091.2 L1831.8 1088 L1831.8 1100 L1828.6 1096.8 L1825.6 1096.8 Z"/>
<path d="M1834 1092 Q1835.5 1094 1834 1096"/>
<path d="M1836.3 1090 Q1839 1094 1836.3 1098"/>
<path d="M1838.6 1088 Q1842.6 1094 1838.6 1100.2"/>
</g>
</svg>
<div class="t" style="right:24.00px;top:1080.81px;font-size:11.8px;color:#f0f0f0;">4:43 PM</div>
<div class="t" style="right:24.00px;top:1096.01px;font-size:11.8px;color:#f0f0f0;">5/2/2026</div>
<div class="a" style="left:590px;top:1076px;width:748px;height:36px;border-radius:18px;background:#262626;border:1px solid #3c3c3c;overflow:hidden"><div class="a" style="left:95px;top:0;width:30px;height:36px;background:linear-gradient(90deg,rgba(25,105,170,0) 0,rgba(25,105,170,0.45) 22%,rgba(25,105,170,0.45) 78%,rgba(25,105,170,0) 100%);filter:blur(1.2px)"></div><div class="a" style="left:140px;top:0;width:28px;height:36px;background:linear-gradient(90deg,rgba(170,135,15,0) 0,rgba(170,135,15,0.4) 22%,rgba(170,135,15,0.4) 78%,rgba(170,135,15,0) 100%);filter:blur(1.2px)"></div><div class="a" style="left:146px;top:23px;width:16px;height:10px;background:rgba(30,80,150,0.45);filter:blur(1.5px)"></div><div class="a" style="left:183px;top:0;width:30px;height:36px;background:linear-gradient(90deg,rgba(30,100,190,0) 0,rgba(30,100,190,0.42) 22%,rgba(40,150,60,0.42) 78%,rgba(40,150,60,0) 100%);filter:blur(1.2px)"></div><div class="a" style="left:363px;top:0;width:28px;height:36px;background:linear-gradient(90deg,rgba(30,110,200,0) 0,rgba(30,110,200,0.38) 22%,rgba(30,110,200,0.38) 78%,rgba(30,110,200,0) 100%);filter:blur(1.2px)"></div><div class="a" style="left:492px;top:0;width:26px;height:36px;background:linear-gradient(90deg,rgba(40,90,210,0) 0,rgba(40,90,210,0.42) 22%,rgba(40,90,210,0.42) 78%,rgba(40,90,210,0) 100%);filter:blur(1.2px)"></div></div>
<div class="a" style="left:1087px;top:1111px;width:15px;height:2px;background:#e8835f;border-radius:1px"></div>
<div class="a" style="left:965px;top:1111px;width:5px;height:2px;background:#bbb;border-radius:1px"></div>
<div class="a" style="left:785px;top:1111px;width:6px;height:2px;background:#bbb;border-radius:1px"></div>
<svg class="s" width="1930" height="1123" viewBox="0 0 1930 1123" >
<g fill="none" stroke="#e8e8e8" stroke-width="1.3">
<path d="M611.5 1086.9 A7.9 7.9 0 1 0 618.6 1086.3"/>
<path d="M689.1 1086.9 A7.9 7.9 0 1 1 682 1086.3"/>
</g>
<path d="M618.5 1083.5 L615 1086.2 L618.5 1089 Z" fill="#e8e8e8"/>
<path d="M681.5 1083.5 L685 1086.2 L681.5 1089 Z" fill="#e8e8e8"/>
<text x="615.4" y="1097" style="font-family:'Liberation Sans';font-size:8.6px;font-weight:bold" fill="#e8e8e8" text-anchor="middle" textLength="9" lengthAdjust="spacingAndGlyphs">15</text>
<text x="685.2" y="1097" style="font-family:'Liberation Sans';font-size:8.6px;font-weight:bold" fill="#e8e8e8" text-anchor="middle" textLength="9" lengthAdjust="spacingAndGlyphs">15</text>
<path d="M645 1085.5 L657 1093.5 L645 1101.5 Z" fill="#ececec"/>
<path d="M1307 1087.5 L1313.5 1094 L1307 1100.5 M1313 1087.5 L1319.5 1094 L1313 1100.5" fill="none" stroke="#f0f0f0" stroke-width="1.5"/>
</svg>
<div class="a" style="left:766px;top:1091px;width:472px;height:6px;background:#fff;border-radius:3px"></div>
<div class="a" style="left:1222px;top:1085px;width:20px;height:17px;background:#fff;border-radius:9px"></div>
<div class="t" style="left:715.00px;top:1087.33px;font-size:13.2px;color:#bdbdbd;">01:01</div>
<div class="t" style="left:1259.00px;top:1087.33px;font-size:13.2px;color:#bdbdbd;">01:01</div>
</body></html>
